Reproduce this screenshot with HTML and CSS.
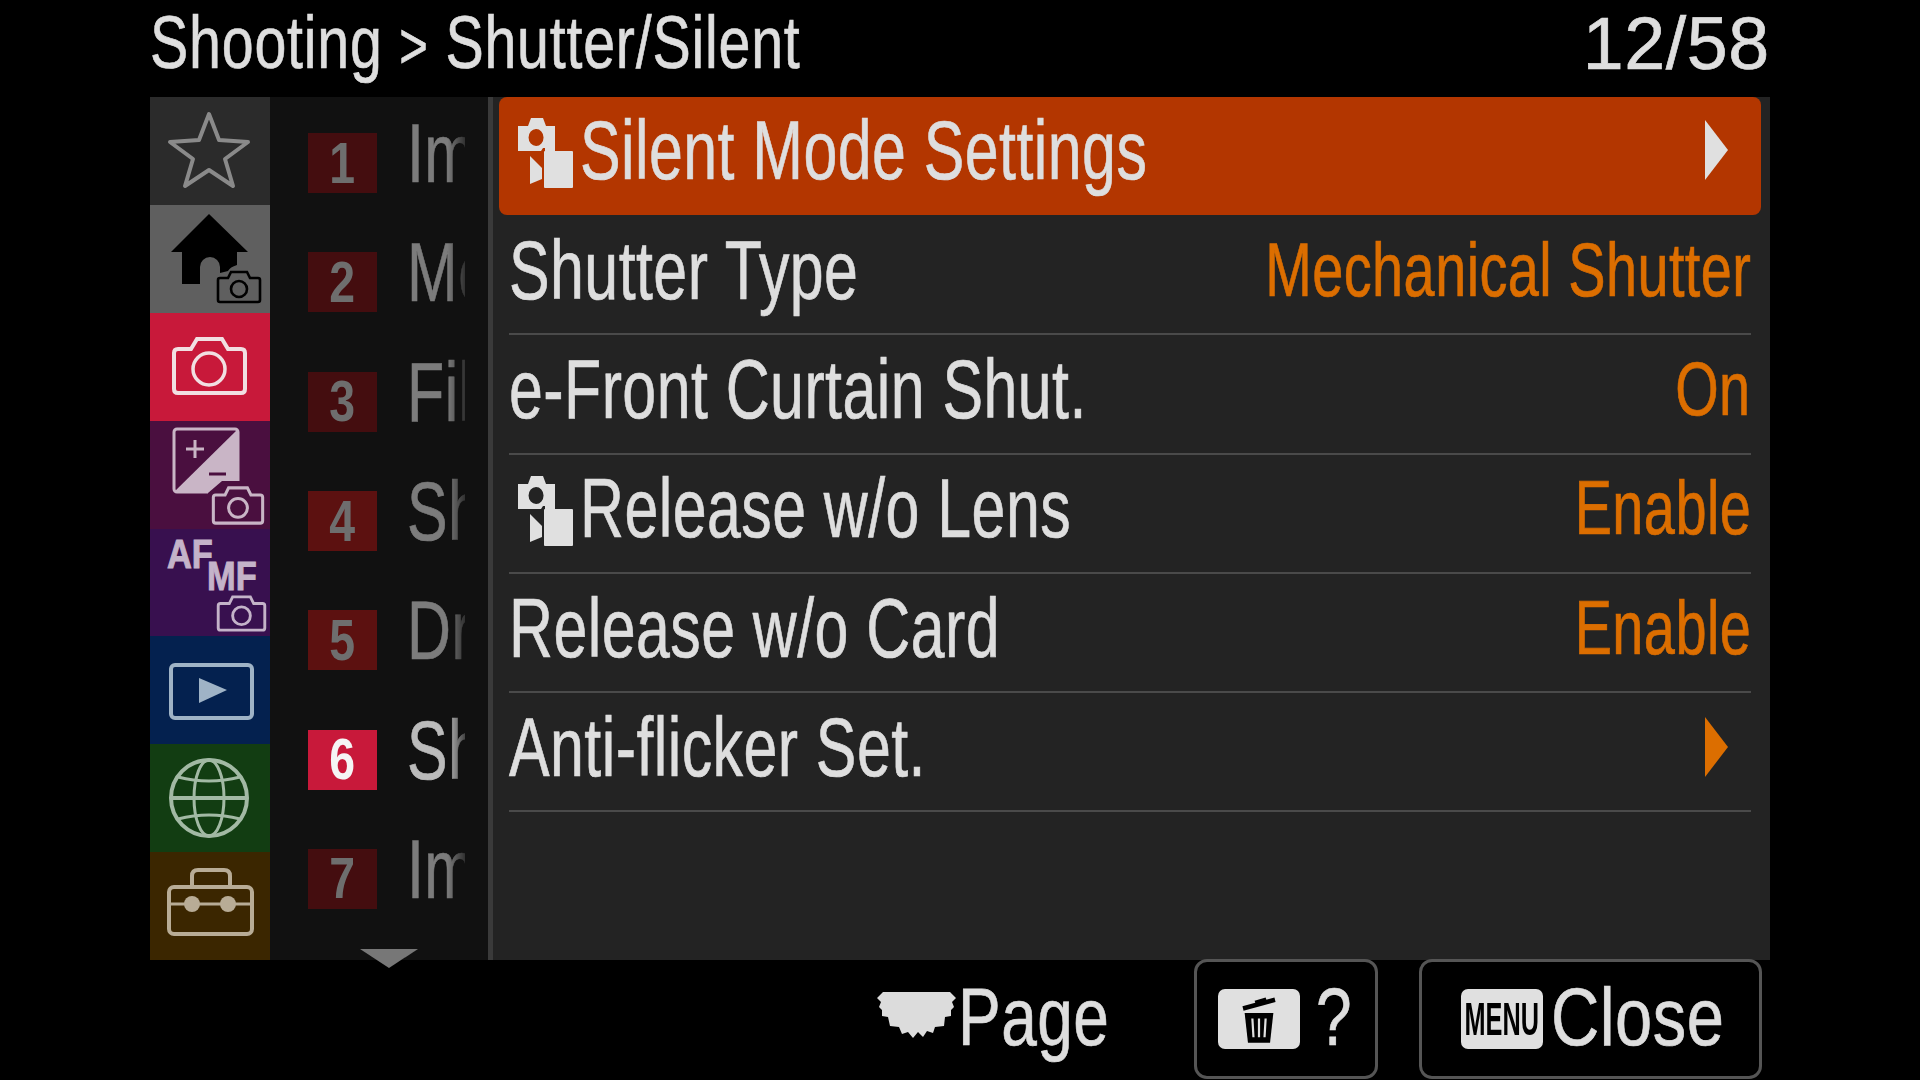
FILE: index.html
```html
<!DOCTYPE html>
<html lang="en">
<head>
  <meta charset="UTF-8">
  <title>Shutter/Silent</title>
  <link rel="stylesheet" href="styles.css">
</head>
<body>
  <svg class="defs" width="0" height="0">
    <symbol id="cam" viewBox="0 0 46 34">
      <path d="M4 8H12L15 2H31L34 8H42Q44 8 44 10V30Q44 32 42 32H4Q2 32 2 30V10Q2 8 4 8Z" fill="none" stroke="currentColor" stroke-width="2.6"/>
      <circle cx="23" cy="19" r="8" fill="none" stroke="currentColor" stroke-width="2.6"/>
    </symbol>
    <symbol id="silent" viewBox="0 0 56 71">
      <path fill-rule="evenodd" d="M1 9H11L14 1H26L29 9H38V34H28V31H26L24 34H1ZM19 12A7.500 8.500 0 1 0 19.100 29A7.500 8.500 0 1 0 19 12Z" fill="currentColor"/>
      <path d="M13 39L25 51V62L13 67Z" fill="currentColor"/>
      <rect x="27" y="34" width="29" height="37" rx="1" fill="currentColor"/>
    </symbol>
  </svg>

  <div class="screen">
    <header class="top">
      <span class="t title">Shooting <span class="sep">&gt;</span> Shutter/Silent</span>
      <span class="t-r count">12/58</span>
    </header>

    <div class="menu">
      <nav class="tabs">
        <div class="tab tab-star">
          <svg viewBox="0 0 120 108"><path d="M59 17L69 43L98 45L75 62L83 89L59 73L35 89L43 62L20 45L49 43Z" fill="none" stroke="#8a8a8a" stroke-width="4" stroke-linejoin="round"/></svg>
        </div>
        <div class="tab tab-home">
          <svg viewBox="0 0 120 108">
            <path d="M59 9L98 47H87V60Q80 62 78 66L70 68V62A10 10 0 0 0 50 62V79H32V47H21Z" fill="#000"/>
            <use href="#cam" x="66" y="65" width="46" height="34" color="#000"/>
          </svg>
        </div>
        <div class="tab tab-shoot">
          <svg viewBox="0 0 120 108">
            <path d="M28 36H41L47 26H72L78 36H91Q95 36 95 40V76Q95 80 91 80H28Q24 80 24 76V40Q24 36 28 36Z" fill="none" stroke="#f1dfe2" stroke-width="4"/>
            <circle cx="59" cy="56" r="16" fill="none" stroke="#f1dfe2" stroke-width="3.500"/>
          </svg>
        </div>
        <div class="tab tab-expo">
          <svg viewBox="0 0 120 108">
            <rect x="24" y="8" width="64" height="63" rx="3" fill="none" stroke="#c9b5c6" stroke-width="3"/>
            <path d="M88 8V71H24Z" fill="#c9b5c6"/>
            <path d="M45 19V37M36 28H54" stroke="#c9b5c6" stroke-width="3"/>
            <path d="M59 53H76" stroke="#4a0f3f" stroke-width="3"/>
            <path d="M58 72L72 60H120V108H58Z" fill="#4a0f3f"/>
            <use href="#cam" x="61" y="64" width="54" height="41" color="#c9b5c6"/>
          </svg>
        </div>
        <div class="tab tab-af">
          <svg viewBox="0 0 120 108">
            <text class="af-text" transform="translate(17 39) scale(.86 1)">AF</text>
            <text class="af-text" transform="translate(57 61) scale(.86 1)">MF</text>
            <use href="#cam" x="66" y="64" width="51" height="41" color="#c4b3c9"/>
          </svg>
        </div>
        <div class="tab tab-play">
          <svg viewBox="0 0 120 108">
            <rect x="21" y="29" width="81" height="53" rx="4" fill="none" stroke="#9fb3c6" stroke-width="4"/>
            <path d="M49 42L77 54L49 67Z" fill="#9fb3c6"/>
          </svg>
        </div>
        <div class="tab tab-net">
          <svg viewBox="0 0 120 108">
            <g fill="none" stroke="#a2b9a4" stroke-width="3">
              <circle cx="59" cy="54" r="38" stroke-width="4"/>
              <ellipse cx="59" cy="54" rx="15" ry="38"/>
              <path d="M21 54H97" stroke-width="4"/>
              <path d="M28 33Q59 41 90 33M28 75Q59 67 90 75"/>
            </g>
          </svg>
        </div>
        <div class="tab tab-tools">
          <svg viewBox="0 0 120 108">
            <g fill="none" stroke="#b8ac96" stroke-width="4">
              <rect x="19" y="35" width="83" height="47" rx="5"/>
              <path d="M42 34V24Q42 18 48 18H74Q80 18 80 24V34"/>
              <path d="M19 52H102" stroke-width="3"/>
            </g>
            <circle cx="42" cy="52" r="8" fill="#b8ac96"/>
            <circle cx="78" cy="52" r="8" fill="#b8ac96"/>
          </svg>
        </div>
      </nav>

      <div class="pages">
        <div class="page-item"><span class="num"><span class="digit">1</span></span><span class="label"><span class="t">Im</span></span></div>
        <div class="page-item"><span class="num"><span class="digit">2</span></span><span class="label"><span class="t">Me</span></span></div>
        <div class="page-item"><span class="num"><span class="digit">3</span></span><span class="label"><span class="t">Fil</span></span></div>
        <div class="page-item warm"><span class="num"><span class="digit">4</span></span><span class="label"><span class="t">Sh</span></span></div>
        <div class="page-item warm"><span class="num"><span class="digit">5</span></span><span class="label"><span class="t">Dr</span></span></div>
        <div class="page-item active"><span class="num"><span class="digit">6</span></span><span class="label"><span class="t">Sh</span></span></div>
        <div class="page-item"><span class="num"><span class="digit">7</span></span><span class="label"><span class="t">Im</span></span></div>
        <div class="more"></div>
      </div>

      <div class="list">
        <div class="row selected">
          <svg class="silent-icon"><use href="#silent"/></svg>
          <span class="t">Silent Mode Settings</span>
          <span class="arrow"></span>
        </div>
        <div class="row">
          <span class="t">Shutter Type</span>
          <span class="t-r value">Mechanical Shutter</span>
        </div>
        <div class="row">
          <span class="t">e-Front Curtain Shut.</span>
          <span class="t-r value">On</span>
        </div>
        <div class="row">
          <svg class="silent-icon"><use href="#silent"/></svg>
          <span class="t">Release w/o Lens</span>
          <span class="t-r value">Enable</span>
        </div>
        <div class="row">
          <span class="t">Release w/o Card</span>
          <span class="t-r value">Enable</span>
        </div>
        <div class="row">
          <span class="t">Anti-flicker Set.</span>
          <span class="arrow arrow-orange"></span>
        </div>
      </div>
    </div>

    <footer class="bottom">
      <div class="page-hint">
        <svg class="dial" viewBox="0 0 79 46"><path d="M6 0H73L79 6L75 10L77 15L74 18V24L68 25L67 34L58 35L56 41L50 39L46 45L41 40L36 46L31 40L25 42L22 35L13 34L11 25L5 24V18L2 15L4 10L0 6Z" fill="#dcdcdc"/></svg>
        <span class="t">Page</span>
      </div>
      <div class="btn btn-help">
        <span class="badge">
          <svg class="trash" viewBox="0 0 36 48">
            <path d="M3 13L32 5L33 9L4 17Z" fill="#000"/>
            <path d="M14 8L24 5L25 8L15 11Z" fill="#000"/>
            <path d="M5 19H31L28 46H8Z" fill="#000"/>
            <path d="M12 24L13 41M18 24V41M24 24L23 41" stroke="#e0e0e0" stroke-width="2"/>
          </svg>
        </span>
        <span class="t">?</span>
      </div>
      <div class="btn btn-close">
        <span class="badge"><span class="menu-word">MENU</span></span>
        <span class="t">Close</span>
      </div>
    </footer>
  </div>
</body>
</html>
```

FILE: styles.css
```css
* {
  box-sizing: border-box;
  margin: 0;
  padding: 0;
}

html, body {
  width: 1920px;
  height: 1080px;
  overflow: hidden;
  background-color: #000;
}

body {
  font-family: "Liberation Sans", Arial, sans-serif;
  color: #dedede;
}

.defs {
  display: block;
  height: 0;
}

.screen {
  width: 1620px;
  height: 1080px;
  margin-left: 150px;
  display: flex;
  flex-direction: column;
  filter: blur(0.6px);
}

/* the camera font is narrower than anything installed, so squeeze it */
.t, .t-r {
  display: inline-block;
  flex-shrink: 0;
  white-space: nowrap;
  font-size: 84px;
  line-height: 96px;
  letter-spacing: 0.6px;
  -webkit-text-stroke: 0.7px currentColor;
  transform: scaleX(0.725);
  transform-origin: left center;
}

.t-r {
  margin-left: auto;
  transform-origin: right center;
}

.top {
  height: 97px;
  display: flex;
  align-items: center;
}

.title {
  font-size: 75px;
  letter-spacing: 1px;
  transform: scaleX(0.765);
  margin-top: -10px;
}

.sep {
  font-size: 64px;
}

.count {
  font-size: 75px;
  transform: scaleX(0.98);
  margin-top: -11px;
}

.menu {
  height: 863px;
  display: flex;
}

.tabs {
  width: 120px;
  display: flex;
  flex-direction: column;
}

.tab {
  height: 107.875px;
}

.tab svg {
  display: block;
  width: 120px;
  height: 108px;
}

.tab-star { background-color: #2b2b2b; }
.tab-home { background-color: #5f5f5f; }
.tab-shoot { background-color: #c8193a; }
.tab-expo { background-color: #4a0f3f; }
.tab-af { background-color: #38104f; }
.tab-play { background-color: #04214f; }
.tab-net { background-color: #123d12; }
.tab-tools { background-color: #3b2600; }

.af-text {
  font-size: 40px;
  font-weight: bold;
  fill: #c4b3c9;
  stroke: #c4b3c9;
  stroke-width: 1px;
}

.pages {
  position: relative;
  width: 223px;
  background-color: #111;
  border-right: 5px solid #3a3a3a;
}

.page-item {
  height: 119.300px;
  padding-left: 38px;
  padding-bottom: 7px;
  display: flex;
  align-items: center;
  gap: 30px;
  color: #6e6e6e;
}

.num {
  width: 69px;
  height: 60px;
  margin-top: 20px;
  flex-shrink: 0;
  display: flex;
  align-items: center;
  justify-content: center;
  background-color: #440d0f;
}

.digit {
  display: inline-block;
  font-size: 58px;
  font-weight: bold;
  margin-top: -2px;
  transform: scaleX(0.8);
}

.label {
  width: 58px;
  height: 96px;
  overflow: hidden;
  -webkit-mask-image: linear-gradient(to right, #000 70%, rgba(0, 0, 0, 0.3));
  mask-image: linear-gradient(to right, #000 70%, rgba(0, 0, 0, 0.3));
}

.page-item .label {
  color: #7c7c7c;
}

.page-item.warm .num {
  background-color: #5c1110;
}

.page-item.active .label {
  color: #bbb;
}

.page-item.active .num {
  background-color: #c8193a;
  color: #f5f5f5;
}

.more {
  position: absolute;
  left: 90px;
  top: 852px;
  width: 0;
  height: 0;
  border-left: 29px solid transparent;
  border-right: 29px solid transparent;
  border-top: 19px solid #777;
}

.list {
  flex: 1;
  background-color: #232323;
  padding: 0 9px 0 6px;
}

.row {
  height: 119.300px;
  margin: 0 10px 0 10px;
  padding-bottom: 10px;
  display: flex;
  align-items: center;
  border-bottom: 2px solid #4a4a4a;
}

.value {
  color: #dc6e00;
  font-size: 76px;
  letter-spacing: 0.6px;
  transform: scaleX(0.735);
}

.row.selected {
  height: 118px;
  margin: 0 0 1px 0;
  padding: 0 33px 12px 10px;
  background-color: #b33600;
  border-bottom: 0;
  border-radius: 8px;
}

.silent-icon {
  width: 56px;
  height: 71px;
  margin: 4px 7px 0 8px;
  flex-shrink: 0;
  color: #e0e0e0;
}

.arrow {
  margin-left: auto;
  width: 0;
  height: 0;
  border-top: 30px solid transparent;
  border-bottom: 30px solid transparent;
  border-left: 23px solid #e0e0e0;
}

.arrow-orange {
  border-left-color: #dc6e00;
  margin-right: 23px;
}

.bottom {
  height: 120px;
  display: flex;
  align-items: center;
  justify-content: flex-end;
  padding-right: 8px;
}

.page-hint {
  width: 234px;
  margin-right: 83px;
  display: flex;
  align-items: center;
  gap: 2px;
}

.dial {
  width: 79px;
  height: 46px;
  flex-shrink: 0;
  margin-bottom: 10px;
}

.bottom .t {
  font-size: 81px;
  margin-top: -6px;
  transform: scaleX(0.79);
}

.btn {
  height: 120px;
  margin-top: -3px;
  border: 3px solid #555;
  border-radius: 13px;
  display: flex;
  align-items: center;
}

.btn-help {
  width: 184px;
  padding-left: 21px;
  gap: 16px;
  margin-right: 41px;
}

.btn-close {
  width: 343px;
  padding-left: 39px;
  gap: 8px;
}

.bottom .btn .t {
  margin-top: -3px;
}

.bottom .btn-close .t {
  transform: scaleX(0.825);
}

.badge {
  width: 82px;
  height: 60px;
  flex-shrink: 0;
  display: flex;
  align-items: center;
  justify-content: center;
  background-color: #e0e0e0;
  border-radius: 7px;
}

.trash {
  width: 40px;
  height: 53px;
}

.menu-word {
  display: inline-block;
  color: #000;
  font-size: 46px;
  font-weight: bold;
  transform: scaleX(0.55);
  white-space: nowrap;
}
```
